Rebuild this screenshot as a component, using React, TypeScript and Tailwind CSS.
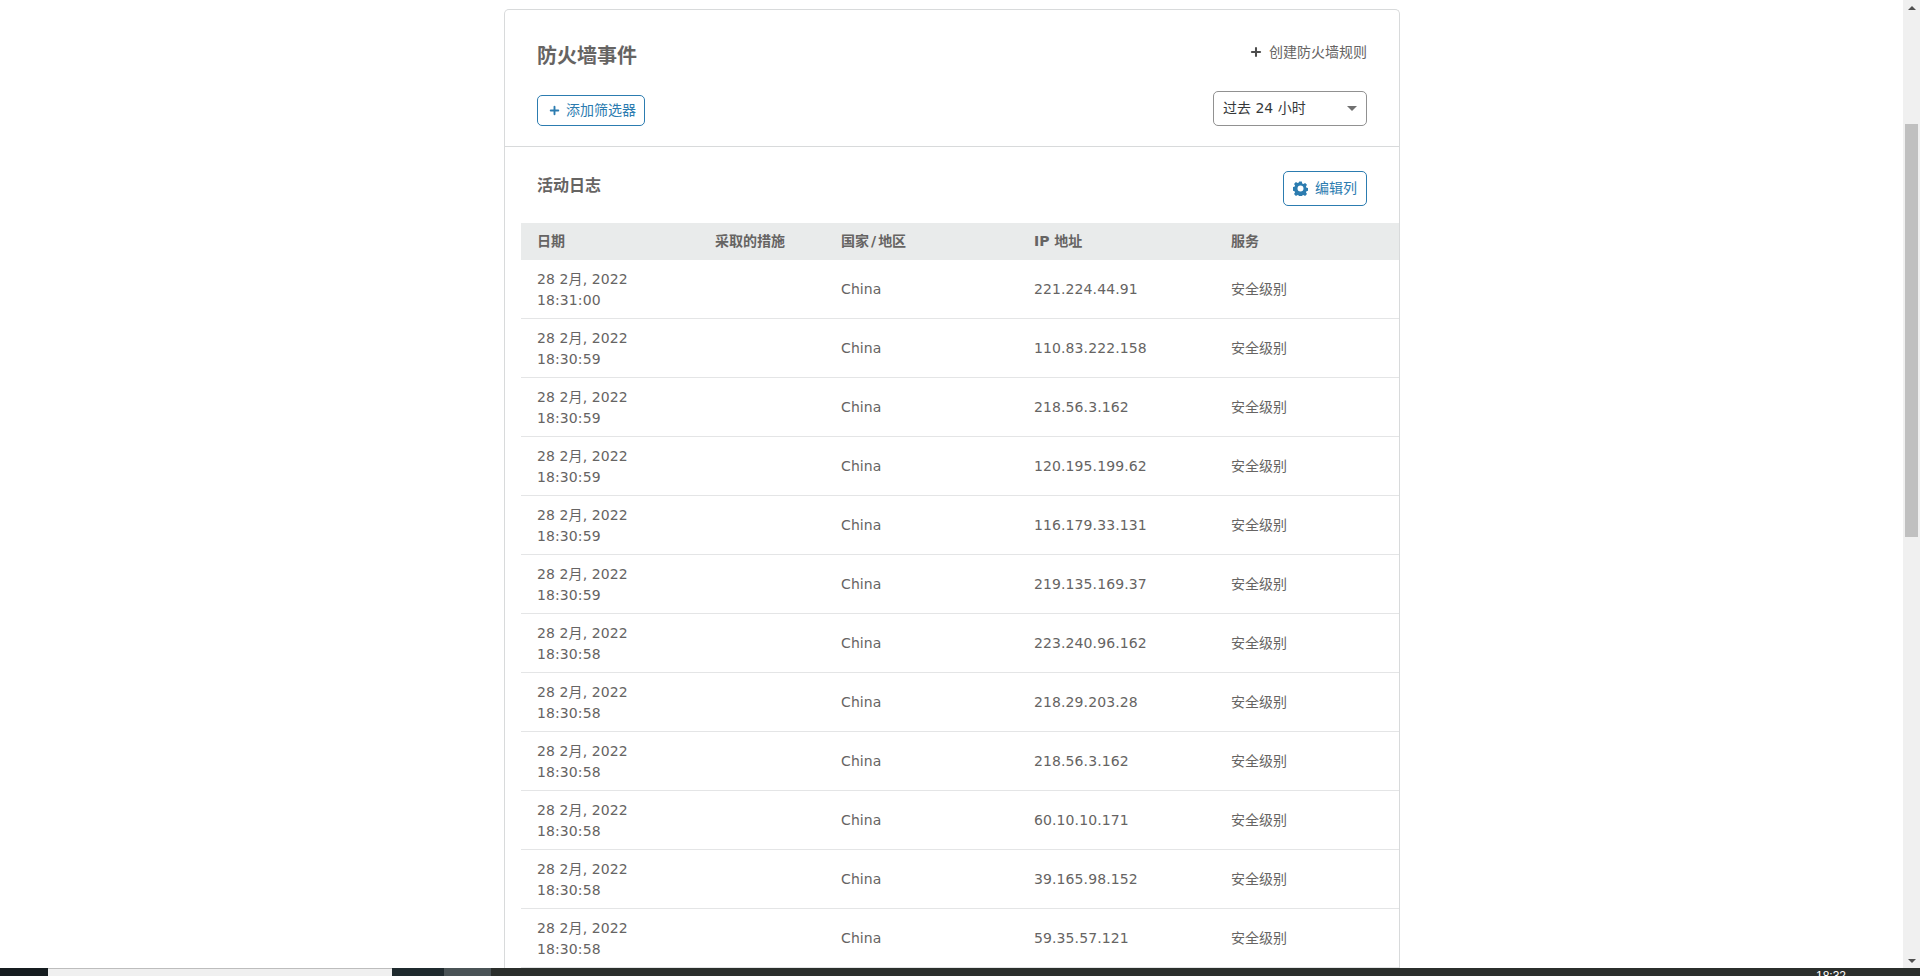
import React from 'react';
import { Plus } from 'lucide-react';

const rows = [
  ['18:31:00', '221.224.44.91'],
  ['18:30:59', '110.83.222.158'],
  ['18:30:59', '218.56.3.162'],
  ['18:30:59', '120.195.199.62'],
  ['18:30:59', '116.179.33.131'],
  ['18:30:59', '219.135.169.37'],
  ['18:30:58', '223.240.96.162'],
  ['18:30:58', '218.29.203.28'],
  ['18:30:58', '218.56.3.162'],
  ['18:30:58', '60.10.10.171'],
  ['18:30:58', '39.165.98.152'],
  ['18:30:58', '59.35.57.121'],
];

const cols = 'grid grid-cols-[178px_126px_193px_197px_184px]';

const Gear = () => (
  <svg viewBox="0 0 16 16" className="w-[15px] h-[15px] text-[#2c7cb0]" fill="currentColor">
    <path
      fillRule="evenodd"
      d="M6.6 0.6h2.8l0.4 2 1.3 0.6 1.8-1.1 2 2-1.1 1.8 0.6 1.3 2 0.4v2.8l-2 0.4-0.6 1.3 1.1 1.8-2 2-1.8-1.1-1.3 0.6-0.4 2H6.6l-0.4-2-1.3-0.6-1.8 1.1-2-2 1.1-1.8-0.6-1.3-2-0.4V6.6l2-0.4 0.6-1.3-1.1-1.8 2-2 1.8 1.1 1.3-0.6zM8 4.8a3.2 3.2 0 1 0 0 6.4 3.2 3.2 0 0 0 0-6.4z"
    />
  </svg>
);

export default function App() {
  return (
    <div className="h-[976px] flex flex-col overflow-hidden bg-white text-[#666463] font-['DejaVu_Sans','Noto_Sans_CJK_SC',sans-serif]">
      <div className="flex flex-1 min-h-0">
        <div className="flex-1 min-w-0 overflow-hidden pt-[9px] pl-[504px]">
          <div className="w-[896px] border border-[#d8dadb] rounded-[5px] border-b-0 pb-2">
            {/* Header */}
            <div className="h-[137px] border-b border-[#d8dadb] px-[32px]">
              <div className="flex items-start justify-between pt-[31px] h-[81px]">
                <h1 className="text-[20px] leading-[30px] font-bold">防火墙事件</h1>
                <button className="flex items-center gap-[6px] text-[14px] leading-[20px] mt-[1px]">
                  <Plus className="w-[14px] h-[14px] text-[#4d4d4d]" strokeWidth={3.5} />
                  创建防火墙规则
                </button>
              </div>
              <div className="flex items-start justify-between">
                <button className="mt-[4px] w-[108px] h-[31px] border border-[#2c7cb0] rounded-[5px] flex items-center pl-[10px] gap-[5px] text-[14px] text-[#2c7cb0]">
                  <Plus className="w-[13px] h-[13px]" strokeWidth={3.5} />
                  添加筛选器
                </button>
                <div className="w-[154px] h-[35px] border border-[#919191] rounded-[5px] flex items-center justify-between px-[9px] text-[14px] text-[#36393a]">
                  <span>过去 24 小时</span>
                  <span className="w-0 h-0 border-x-[5px] border-x-transparent border-t-[5px] border-t-[#707070]" />
                </div>
              </div>
            </div>

            {/* Activity log */}
            <div className="pl-[16px]">
              <div className="h-[76px] flex items-start justify-between pl-[16px] pr-[32px]">
                <h2 className="text-[16px] leading-[24px] font-bold mt-[27px]">活动日志</h2>
                <button className="mt-[24px] w-[84px] h-[35px] border border-[#2c7cb0] rounded-[5px] flex items-center pl-[9px] gap-[7px] text-[14px] text-[#2c7cb0]">
                  <Gear />
                  编辑列
                </button>
              </div>

              <div className={`${cols} h-[37px] bg-[#e9ebeb] items-center text-[14px] font-bold`}>
                <div className="pl-4">日期</div>
                <div className="pl-4">采取的措施</div>
                <div className="pl-4">国家<span className="mx-[2px]">/</span>地区</div>
                <div className="pl-4">IP 地址</div>
                <div className="pl-4">服务</div>
              </div>

              {rows.map(([time, ip], i) => (
                <div key={i} className={`${cols} h-[59px] items-center border-b border-[#e4e5e6] text-[14px] tracking-[0.1px]`}>
                  <div className="pl-4 leading-[21px] pt-[2px]">
                    <div>28 2月, 2022</div>
                    <div>{time}</div>
                  </div>
                  <div />
                  <div className="pl-4">China</div>
                  <div className="pl-4">{ip}</div>
                  <div className="pl-4 tracking-normal">安全级别</div>
                </div>
              ))}
            </div>
          </div>
        </div>

        {/* Scrollbar */}
        <div className="w-[17px] bg-[#f0f0f0] flex flex-col items-center justify-between pt-[6px] pb-[5px] relative">
          <span className="w-0 h-0 border-x-[4px] border-x-transparent border-b-[4px] border-b-[#505050]" />
          <div className="absolute top-[124px] left-[2px] w-[13px] h-[413px] bg-[#c0c0c0]" />
          <span className="w-0 h-0 border-x-[4px] border-x-transparent border-t-[4px] border-t-[#505050]" />
        </div>
      </div>

      {/* Taskbar */}
      <div className="h-[8px] flex bg-[#1f2a2e] overflow-hidden relative">
        <div className="w-[48px] bg-[#161d20]" />
        <div className="w-[344px] bg-[#f0f0f0] border-t border-[#bdbdbd]" />
        <div className="w-[47px] ml-[52px] bg-[#4a5356]" />
        <div className="flex-1 bg-[#2b2f2c] flex justify-end pr-[74px] pt-[1px]">
          <span className="text-[12px] leading-[14px] text-white font-['Liberation_Sans',sans-serif]">18:32</span>
        </div>
      </div>
    </div>
  );
}
